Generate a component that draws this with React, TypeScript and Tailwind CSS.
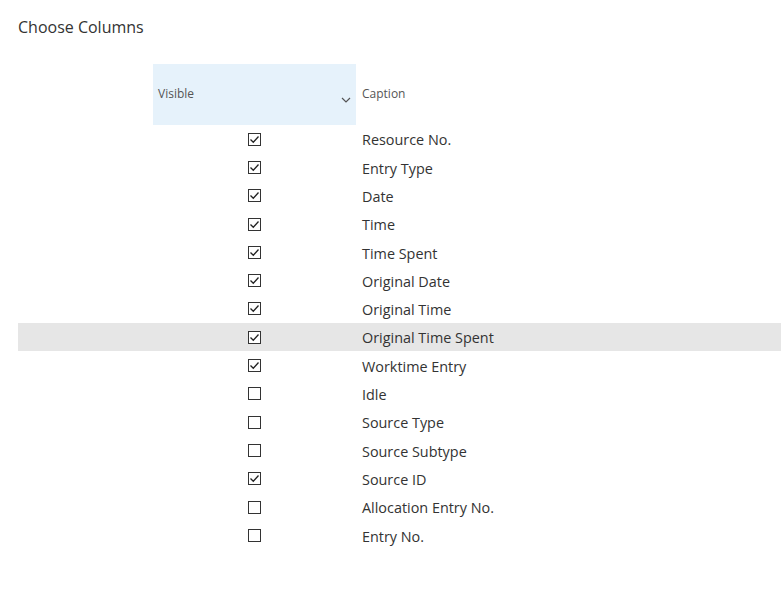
import React from 'react';

type Column = { caption: string; visible: boolean; selected?: boolean };

const columns: Column[] = [
  { caption: 'Resource No.', visible: true },
  { caption: 'Entry Type', visible: true },
  { caption: 'Date', visible: true },
  { caption: 'Time', visible: true },
  { caption: 'Time Spent', visible: true },
  { caption: 'Original Date', visible: true },
  { caption: 'Original Time', visible: true },
  { caption: 'Original Time Spent', visible: true, selected: true },
  { caption: 'Worktime Entry', visible: true },
  { caption: 'Idle', visible: false },
  { caption: 'Source Type', visible: false },
  { caption: 'Source Subtype', visible: false },
  { caption: 'Source ID', visible: true },
  { caption: 'Allocation Entry No.', visible: false },
  { caption: 'Entry No.', visible: false },
];

const CheckBox: React.FC<{ checked: boolean }> = ({ checked }) => (
  <div className="w-[13px] h-[13px] border border-[#333] bg-white flex items-center justify-center">
    {checked && (
      <svg width="11" height="11" viewBox="0 0 11 11" fill="none">
        <path d="M1.5 5.5 L4.3 8.3 L9.5 2.5" stroke="#222" strokeWidth="1.3" />
      </svg>
    )}
  </div>
);

const App: React.FC = () => {
  return (
    <div className="w-[781px] h-[602px] bg-white text-[#333] pl-[18px] pt-[15px]" style={{ fontFamily: '"Open Sans", "Noto Sans", sans-serif' }}>
      <h1 className="text-[16px] leading-[24px] text-[#333]">Choose Columns</h1>

      <div className="mt-[25px]">
        <div className="flex h-[61px]">
          <div className="w-[135px]" />
          <div className="w-[203px] bg-[#e6f2fb] relative pl-[5px] pb-[2px] flex items-center text-[12px] text-[#555]">
            Visible
            <svg className="absolute right-[5px] top-[33px]" width="10" height="6" viewBox="0 0 10 6" fill="none">
              <path d="M1 1 L5 5 L9 1" stroke="#555" strokeWidth="1.2" />
            </svg>
          </div>
          <div className="pl-[6px] pb-[2px] flex items-center text-[12px] text-[#555]">Caption</div>
        </div>

        {columns.map((c) => (
          <div key={c.caption} className={`flex h-[28.3px] items-center ${c.selected ? 'bg-[#e6e6e6]' : ''}`}>
            <div className="w-[135px]" />
            <div className="w-[203px] flex justify-center">
              <CheckBox checked={c.visible} />
            </div>
            <div className="pl-[6px] pt-[2px] text-[14.4px] text-[#333]">{c.caption}</div>
          </div>
        ))}
      </div>
    </div>
  );
};

export default App;
